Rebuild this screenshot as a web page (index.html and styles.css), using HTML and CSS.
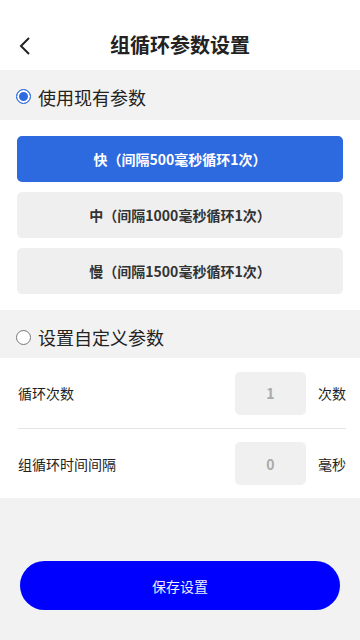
FILE: index.html
```html
<!DOCTYPE html>
<html lang="zh">
<head>
	<meta charset="utf-8">
	<title>组循环参数设置</title>
	<link rel="stylesheet" href="styles.css">
</head>
<body>
	<header class="topbar">
		<span class="back">
			<svg width="14" height="20" viewBox="0 0 14 20"><path d="M11 2 L3 10 L11 18" fill="none" stroke="#222" stroke-width="2"/></svg>
		</span>
		<h1>组循环参数设置</h1>
	</header>
	<div class="section-title">
		<span class="radio checked"></span>
		<span>使用现有参数</span>
	</div>
	<div class="presets">
		<div class="preset active">快（间隔500毫秒循环1次）</div>
		<div class="preset">中（间隔1000毫秒循环1次）</div>
		<div class="preset">慢（间隔1500毫秒循环1次）</div>
	</div>
	<div class="section-title second">
		<span class="radio"></span>
		<span>设置自定义参数</span>
	</div>
	<div class="custom">
		<div class="row">
			<span class="label">循环次数</span>
			<span class="box">1</span>
			<span class="unit">次数</span>
		</div>
		<div class="row">
			<span class="label">组循环时间间隔</span>
			<span class="box">0</span>
			<span class="unit">毫秒</span>
		</div>
	</div>
	<div class="footer">
		<button class="save">保存设置</button>
	</div>
</body>
</html>
```

FILE: styles.css
```css
html, body {
	margin: 0;
	padding: 0;
}
body {
	font-family: "Noto Sans CJK SC", "Noto Sans", sans-serif;
	background-color: #f2f2f2;
	color: #222;
	width: 360px;
	height: 640px;
	overflow: hidden;
}
.topbar {
	background-color: #fff;
	height: 70px;
	display: flex;
	align-items: center;
	justify-content: center;
	position: relative;
	padding-top: 18px;
	box-sizing: border-box;
}
.topbar h1 {
	margin: 0;
	font-size: 20px;
	font-weight: bold;
}
.back {
	position: absolute;
	left: 18px;
	top: 36px;
	display: flex;
}
.section-title {
	height: 50px;
	display: flex;
	align-items: center;
	padding-left: 16px;
	padding-top: 3px;
	box-sizing: border-box;
	font-size: 18px;
	gap: 7px;
}
.section-title.second {
	height: 48px;
	padding-top: 6px;
}
.radio {
	width: 13px;
	height: 13px;
	border: 1px solid #777;
	border-radius: 50%;
	background-color: #fff;
	box-sizing: content-box;
}
.radio.checked {
	border-color: #2d6be0;
	background-color: #2d6be0;
	box-shadow: inset 0 0 0 2px #fff;
}
.presets {
	background-color: #fff;
	padding: 16px 17px;
	display: flex;
	flex-direction: column;
	gap: 10px;
}
.preset {
	height: 46px;
	border-radius: 5px;
	background-color: #efefef;
	display: flex;
	align-items: center;
	justify-content: center;
	font-size: 14px;
	font-weight: bold;
	color: #333;
}
.preset.active {
	background-color: #2d69df;
	color: #fff;
}
.custom {
	background-color: #fff;
	padding: 0 14px 0 18px;
}
.row {
	height: 70px;
	display: flex;
	align-items: center;
	font-size: 14px;
}
.row + .row {
	height: 69px;
	border-top: 1px solid #e4e4e4;
}
.label {
	flex: 1;
}
.box {
	width: 71px;
	height: 43px;
	border-radius: 5px;
	background-color: #f0f0f0;
	color: #aaa;
	font-weight: bold;
	display: flex;
	align-items: center;
	justify-content: center;
	margin-right: 12px;
}
.unit {
	width: 28px;
	text-align: right;
}
.footer {
	padding: 63px 20px 0;
}
.save {
	width: 100%;
	height: 49px;
	border: none;
	border-radius: 25px;
	background-color: #0000ff;
	color: #eef;
	font-family: inherit;
	font-size: 14px;
}
```
